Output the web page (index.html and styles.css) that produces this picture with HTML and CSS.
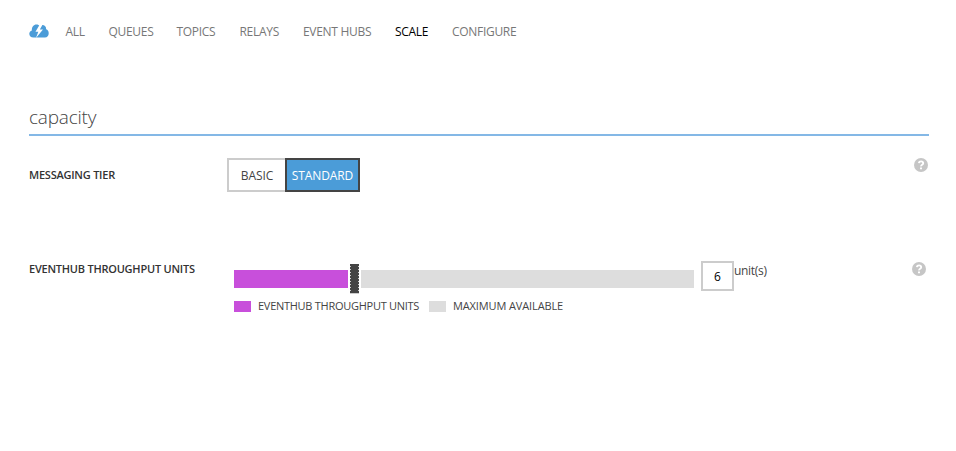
FILE: index.html
```html
<!DOCTYPE html>
<html lang="en">
<head>
<meta charset="utf-8">
<title>Scale</title>
<link rel="stylesheet" href="styles.css">
</head>
<body>
<nav class="tabs">
  <svg class="cloud" width="20" height="14" viewBox="0 0 21 14" preserveAspectRatio="none">
    <path fill="#4b9cd8" d="M4.500 13.500C2 13.500.3 12 .3 9.800.3 8 1.400 6.800 3 6.400 2.800 3 4.800.5 7.900.5c1.500 0 2.700.6 3.500 1.500C12.200 1.300 13.100 1 14 1c2.500 0 4.200 1.800 4 4.300 1.700.5 2.700 2 2.700 4 0 2.600-1.500 4.200-4 4.200z"/>
    <path fill="#fff" d="M11.600 0 6.800 7.700h3L7.300 14l7.400-8.600h-3.300L14 1z"/>
  </svg>
  <a class="w-all">ALL</a>
  <a class="w-queues">QUEUES</a>
  <a class="w-topics">TOPICS</a>
  <a class="w-relays">RELAYS</a>
  <a class="w-hubs">EVENT HUBS</a>
  <a class="w-scale active">SCALE</a>
  <a>CONFIGURE</a>
</nav>
<main>
  <h1>capacity</h1>
  <section class="row tier">
    <h2>MESSAGING TIER</h2>
    <div class="toggle"><button class="basic">BASIC</button><button class="standard">STANDARD</button></div>
    <svg class="help" width="14" height="14" viewBox="0 0 14 14"><circle cx="7" cy="7" r="7" fill="#c6c6c6"/><path d="M4.800 5.100Q5.100 3.400 7.100 3.400T9.200 5.200Q9.200 6.100 8.100 6.800T7.100 8.400" fill="none" stroke="#fff" stroke-width="1.900"/><path fill="#fff" d="M6 9.400H8v1.900H6z"/></svg>
  </section>
  <section class="row units">
    <h2>EVENTHUB THROUGHPUT UNITS</h2>
    <div class="meter">
      <div class="slider"><div class="used"></div><div class="thumb"></div><div class="free"></div></div>
      <div class="legend"><i class="key purple"></i><span class="name">EVENTHUB THROUGHPUT UNITS</span><i class="key"></i><span class="max">MAXIMUM AVAILABLE</span></div>
    </div>
    <div class="value">6</div>
    <span class="unit">unit(s)</span>
    <svg class="help" width="14" height="14" viewBox="0 0 14 14"><circle cx="7" cy="7" r="7" fill="#c6c6c6"/><path d="M4.800 5.100Q5.100 3.400 7.100 3.400T9.200 5.200Q9.200 6.100 8.100 6.800T7.100 8.400" fill="none" stroke="#fff" stroke-width="1.900"/><path fill="#fff" d="M6 9.400H8v1.900H6z"/></svg>
  </section>
</main>
</body>
</html>
```
FILE: styles.css
```css
* { box-sizing: border-box; }
body {
  margin: 0;
  height: 451px;
  overflow: hidden;
  background: #fff;
  color: #444;
  font: 12px/16px "Segoe UI", "Open Sans", "Noto Sans", sans-serif;
  font-stretch: 92%;
  white-space: nowrap;
}
.tabs { display: flex; height: 40px; padding: 24px 0 0 29px; color: #777; letter-spacing: -.3px; }
.cloud { width: 20px; margin-right: 16.500px; }
.w-all { width: 43px; }
.w-queues { width: 68px; }
.w-topics { width: 63px; }
.w-relays { width: 63.500px; }
.w-hubs { width: 92px; }
.w-scale { width: 57px; }
.active { color: #000; }
main { width: 900px; margin: 62px 0 0 29px; }
h1 {
  height: 34px;
  margin: 0;
  border-bottom: 2px solid #84b8e6;
  font-size: 19px;
  line-height: 30px;
  font-weight: 300;
  letter-spacing: -.2px;
}
h2 { width: 198px; margin: 0; color: #333; font-size: 11px; line-height: 16px; font-weight: 600; letter-spacing: -.23px; }
.row { display: flex; align-items: flex-start; }
.tier { padding-top: 22px; height: 125px; }
.tier h2 { margin-top: 9px; }
.toggle { display: flex; }
button { height: 34px; padding: 2px 0 0; font: inherit; background: #fff; color: #444; letter-spacing: -.1px; }
.basic { width: 58px; border: 2px solid #ccc; border-right: 0; }
.standard { width: 75px; border: 2px solid #444; background: #4b9cd8; color: #fff; }
.help { margin-left: auto; margin-right: 1px; }
.units h2 { width: 205px; }
.meter { width: 467px; }
.slider { display: flex; align-items: center; height: 32px; margin-top: 2px; }
.used { width: 114px; height: 18px; background: #c84fdb; }
.thumb {
  width: 9px;
  height: 30px;
  margin: 0 2px;
  background:
    linear-gradient(#444, #444) center / 7px 28px no-repeat,
    repeating-linear-gradient(#444 0 2px, #ccc 2px 3px);
}
.free { width: 333px; height: 18px; background: #ddd; }
.legend { display: flex; align-items: center; height: 16px; margin-top: 3px; font-size: 11px; }
.key { width: 17px; height: 11px; background: #ddd; }
.purple { background: #c84fdb; }
.name { width: 171px; margin-left: 7px; letter-spacing: -.27px; }
.max { margin-left: 7px; letter-spacing: -.12px; }
.value { width: 33px; height: 30px; border: 2px solid #ccc; color: #000; line-height: 27px; text-align: center; }
.unit { margin-top: 2px; letter-spacing: -.3px; }
.units .help { margin-top: 1px; margin-right: 3px; }
```
